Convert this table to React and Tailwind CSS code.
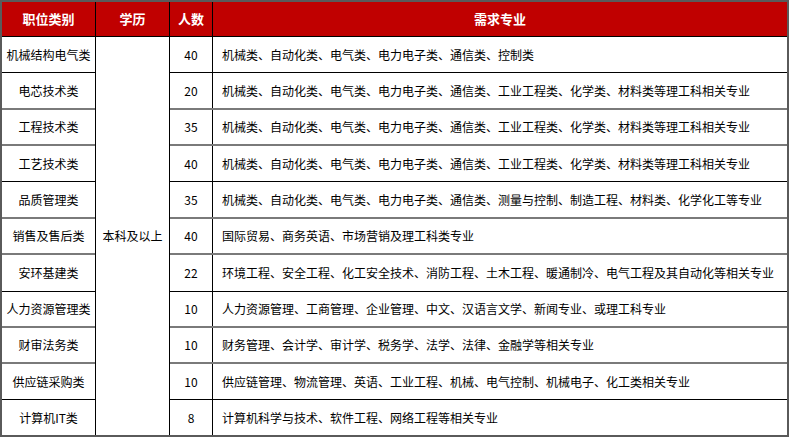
import React from 'react';

const rows = [
  { name: '机械结构电气类', num: '40', major: '机械类、自动化类、电气类、电力电子类、通信类、控制类', h: 36, line: 'dark' },
  { name: '电芯技术类', num: '20', major: '机械类、自动化类、电气类、电力电子类、通信类、工业工程类、化学类、材料类等理工科相关专业', h: 37, line: 'grey' },
  { name: '工程技术类', num: '35', major: '机械类、自动化类、电气类、电力电子类、通信类、工业工程类、化学类、材料类等理工科相关专业', h: 36, line: 'grey' },
  { name: '工艺技术类', num: '40', major: '机械类、自动化类、电气类、电力电子类、通信类、工业工程类、化学类、材料类等理工科相关专业', h: 36, line: 'dark' },
  { name: '品质管理类', num: '35', major: '机械类、自动化类、电气类、电力电子类、通信类、测量与控制、制造工程、材料类、化学化工等专业', h: 37, line: 'grey' },
  { name: '销售及售后类', num: '40', major: '国际贸易、商务英语、市场营销及理工科类专业', h: 36, line: 'grey' },
  { name: '安环基建类', num: '22', major: '环境工程、安全工程、化工安全技术、消防工程、土木工程、暖通制冷、电气工程及其自动化等相关专业', h: 37, line: 'dark' },
  { name: '人力资源管理类', num: '10', major: '人力资源管理、工商管理、企业管理、中文、汉语言文学、新闻专业、或理工科专业', h: 36, line: 'grey' },
  { name: '财审法务类', num: '10', major: '财务管理、会计学、审计学、税务学、法学、法律、金融学等相关专业', h: 36, line: 'grey' },
  { name: '供应链采购类', num: '10', major: '供应链管理、物流管理、英语、工业工程、机械、电气控制、机械电子、化工类相关专业', h: 36, line: 'dark' },
  { name: '计算机IT类', num: '8', major: '计算机科学与技术、软件工程、网络工程等相关专业', h: 35, line: 'none' },
];

const lineCls = (line) =>
  line === 'dark' ? 'border-b border-black' : line === 'grey' ? 'border-b-2 border-[#7a7a7a]' : '';

export default function App() {
  return (
    <div
      className="w-[789px] h-[437px] box-border border-2 border-[#5a5a5a] bg-white text-[12px] text-black overflow-hidden"
      style={{ fontFamily: '"Noto Sans CJK SC", "Noto Sans", sans-serif' }}
    >
      <div className="flex h-[35px] bg-[#c00000] text-white font-bold text-[13px] border-b border-black box-border">
        <div className="w-[94px] flex items-center justify-center border-r border-black">职位类别</div>
        <div className="w-[74px] flex items-center justify-center border-r border-black">学历</div>
        <div className="w-[43px] flex items-center justify-center border-r border-black">人数</div>
        <div className="flex-1 flex items-center justify-center">需求专业</div>
      </div>
      <div className="flex">
        <div className="w-[94px] flex flex-col border-r border-black">
          {rows.map((r, i) => (
            <div key={i} style={{ height: r.h }} className={'flex items-center justify-center box-border ' + lineCls(r.line)}>
              {r.name}
            </div>
          ))}
        </div>
        <div className="w-[74px] flex items-center justify-center border-r border-black">本科及以上</div>
        <div className="flex-1 flex flex-col">
          {rows.map((r, i) => (
            <div key={i} style={{ height: r.h }} className={'flex box-border ' + lineCls(r.line)}>
              <div className="w-[43px] flex items-center justify-center border-r border-black">{r.num}</div>
              <div className="flex-1 flex items-center pl-[9px] whitespace-nowrap">{r.major}</div>
            </div>
          ))}
        </div>
      </div>
    </div>
  );
}
